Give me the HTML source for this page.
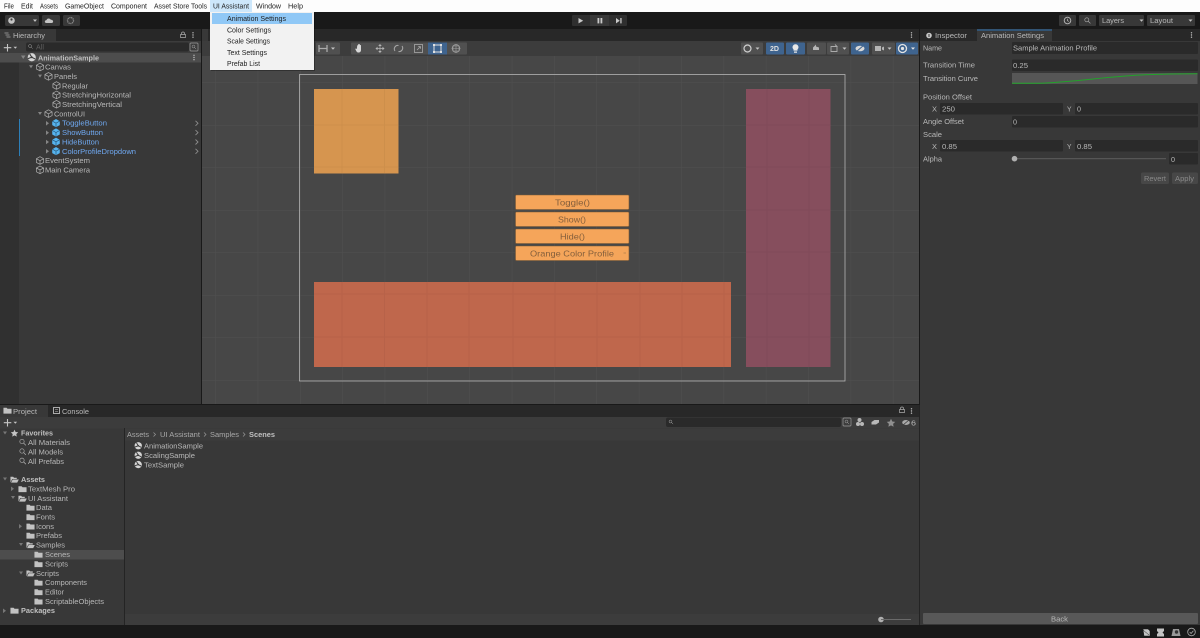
<!DOCTYPE html>
<html><head><meta charset="utf-8"><style>
html,body{margin:0;padding:0;background:#191919;width:1200px;height:638px;overflow:hidden}
svg{display:block;filter:blur(.35px)}
text{font-family:"Liberation Sans",sans-serif;font-size:7.6px;fill:#b8b8b8}
.m{fill:#1e1e1e}
.b{font-weight:bold;fill:#c0c0c0}
.p{fill:#6fa8f0}
.d{fill:#8a8a8a}
</style></head><body>
<svg width="1200" height="638" viewBox="0 0 1200 638" xmlns="http://www.w3.org/2000/svg">
<defs>
<symbol id="cube" viewBox="0 0 10 10"><path d="M5 .8 9 3v4.200L5 9.300 1 7.200V3ZM1 3l4 2.200L9 3M5 5.200v4" fill="none" stroke="#aaa" stroke-width=".8"/></symbol>
<symbol id="pre" viewBox="0 0 10 10"><path d="M5 .6 9.200 3v4.400L5 9.600.8 7.400V3Z" fill="#56b4ef"/><path d="M1 3l4 2.200L9 3M5 5.200v4" fill="none" stroke="#24506f" stroke-width=".7"/></symbol>
<symbol id="fold" viewBox="0 0 10 10"><path d="M.5 2h3.500l1 1h4.500v5.500H.5Z" fill="#c2c2c2"/></symbol>
<symbol id="open" viewBox="0 0 10 10"><path d="M.5 2h3l1 1h3v1.500H2.500L.5 8.500Z M3 5h6.800L8 8.500H1.200Z" fill="#c2c2c2"/></symbol>
<symbol id="sc" viewBox="0 0 10 10"><circle cx="5" cy="5" r="4.300" fill="#d4d4d4"/><path d="M5 5 2.900 1.500M5 5 1 6.500M5 5 8.500 6.800" stroke="#3a3a3a" stroke-width="1.100"/><circle cx="5" cy="5" r="1" fill="#3a3a3a"/></symbol>
<symbol id="mag" viewBox="0 0 10 10"><circle cx="4" cy="4" r="2.900" fill="none" stroke="#aaa" stroke-width=".9"/><path d="M6.200 6.200 9.200 9.200" stroke="#aaa" stroke-width="1"/></symbol>
<pattern id="grid" x="3.600" y="-2.500" width="42.350" height="42.500" patternUnits="userSpaceOnUse"><path d="M0 0V42.500M0 0H42.350" stroke="#505050" stroke-width="1" fill="none"/></pattern>
</defs>

<rect width="1200" height="638" fill="#191919"/>
<!-- menu -->
<rect width="1200" height="12" fill="#fdfdfd"/>
<rect x="210" y="0" width="42" height="12" fill="#cde7fb"/>
<g class="mn">
<text class="m" x="4" y="8.500" textLength="10" lengthAdjust="spacingAndGlyphs">File</text>
<text class="m" x="21" y="8.500" textLength="12" lengthAdjust="spacingAndGlyphs">Edit</text>
<text class="m" x="40" y="8.500" textLength="18" lengthAdjust="spacingAndGlyphs">Assets</text>
<text class="m" x="65" y="8.500" textLength="39" lengthAdjust="spacingAndGlyphs">GameObject</text>
<text class="m" x="111" y="8.500" textLength="36" lengthAdjust="spacingAndGlyphs">Component</text>
<text class="m" x="154" y="8.500" textLength="53" lengthAdjust="spacingAndGlyphs">Asset Store Tools</text>
<text class="m" x="213" y="8.500" textLength="36" lengthAdjust="spacingAndGlyphs">UI Assistant</text>
<text class="m" x="256" y="8.500" textLength="25" lengthAdjust="spacingAndGlyphs">Window</text>
<text class="m" x="288" y="8.500" textLength="15" lengthAdjust="spacingAndGlyphs">Help</text>
</g>

<!-- toolbar -->
<rect x="5" y="15" width="34" height="11" rx="1.500" fill="#383838"/>
<circle cx="11.500" cy="20.500" r="3.300" fill="#c4c4c4"/><circle cx="11.500" cy="19.500" r="1.100" fill="#383838"/>
<path d="M33 19.500h4l-2 2.400Z" fill="#c4c4c4"/>
<rect x="42" y="15" width="18" height="11" rx="1.500" fill="#383838"/>
<path d="M46.500 23c-2.200 0-2.200-2.700 0-2.900.5-2 3.500-2 4.300-.3 2.700-.3 3.200 3.200.7 3.200Z" fill="#c4c4c4"/>
<rect x="63" y="15" width="17" height="11" rx="1.500" fill="#383838"/>
<circle cx="70.500" cy="20.500" r="3" fill="none" stroke="#8b8b8b" stroke-width="1.300" stroke-dasharray="1.200 .6"/>

<rect x="572" y="15" width="55" height="11" rx="1" fill="#2f2f2f"/>
<rect x="590" y="15" width="19" height="11" fill="#383838"/>
<path d="M578.500 18v5.400l4.700-2.700Z" fill="#c8c8c8"/>
<rect x="597.500" y="18" width="1.800" height="5.400" fill="#c8c8c8"/><rect x="600.500" y="18" width="1.800" height="5.400" fill="#c8c8c8"/>
<path d="M616 18v5.400l3.800-2.700ZM620.300 18h1.300v5.400h-1.300Z" fill="#c8c8c8"/>

<rect x="1059" y="15" width="17" height="11" rx="1" fill="#383838"/>
<circle cx="1067.500" cy="20.500" r="3.300" fill="none" stroke="#bbb" stroke-width=".9"/><path d="M1067.500 18.700v2l1.300.8" stroke="#bbb" stroke-width=".7" fill="none"/>
<rect x="1079" y="15" width="17" height="11" rx="1" fill="#383838"/>
<use href="#mag" x="1084" y="17" width="7" height="7"/>
<rect x="1099" y="15" width="45" height="11" rx="1" fill="#383838"/>
<text x="1102" y="23" textLength="22" lengthAdjust="spacingAndGlyphs">Layers</text>
<path d="M1139.500 19.500h4l-2 2.300Z" fill="#c4c4c4"/>
<rect x="1147" y="15" width="48" height="11" rx="1" fill="#383838"/>
<text x="1150" y="23" textLength="23" lengthAdjust="spacingAndGlyphs">Layout</text>
<path d="M1188.500 19.500h4l-2 2.300Z" fill="#c4c4c4"/>

<!-- hierarchy -->
<rect x="0" y="29" width="201" height="375" fill="#383838"/>
<rect x="0" y="29" width="201" height="12" fill="#282828"/>
<rect x="0" y="29" width="56" height="12" fill="#383838"/>
<path d="M4.500 33h4M5.500 35h4M6.500 37h4" stroke="#aaa" stroke-width=".8"/>
<text x="13" y="38" textLength="32" lengthAdjust="spacingAndGlyphs">Hierarchy</text>
<path d="M181.500 34.500v-1c0-2 3-2 3 0v1M180.500 34.500h5v3h-5Z" fill="none" stroke="#aaa" stroke-width=".7"/>
<circle cx="193" cy="32.800" r=".7" fill="#c0c0c0"/><circle cx="193" cy="35" r=".7" fill="#c0c0c0"/><circle cx="193" cy="37.200" r=".7" fill="#c0c0c0"/>
<rect x="0" y="41" width="201" height="12" fill="#3c3c3c"/>
<path d="M7.500 44v7.500M3.800 47.700h7.500" stroke="#c4c4c4" stroke-width="1.100"/>
<path d="M13.500 46.700h3.600l-1.800 2Z" fill="#c4c4c4"/>
<rect x="26" y="42.500" width="163" height="9" rx="2" fill="#2a2a2a"/>
<use href="#mag" x="28" y="44" width="5" height="5"/>
<text x="36" y="49.500" class="d" style="fill:#5f5f5f" textLength="8" lengthAdjust="spacingAndGlyphs">All</text>
<rect x="190" y="43" width="8" height="8" rx="1" fill="none" stroke="#9a9a9a" stroke-width=".7"/><use href="#mag" x="191.500" y="44.500" width="5" height="5"/>
<rect x="0" y="53" width="19" height="351" fill="#303030"/>
<rect x="0" y="53" width="201" height="9.500" fill="#4d4d4d"/>
<path d="M21 55.500h4.500L23.200 59Z" fill="#858585"/>
<use href="#sc" x="27" y="52.500" width="9.500" height="9.500"/>
<text class="b" x="38" y="60.300" textLength="61" lengthAdjust="spacingAndGlyphs">AnimationSample</text>
<circle cx="194" cy="55.300" r=".7" fill="#c0c0c0"/><circle cx="194" cy="57.500" r=".7" fill="#c0c0c0"/><circle cx="194" cy="59.700" r=".7" fill="#c0c0c0"/>

<path d="M29 65.300h4l-2 3ZM38 74.600h4l-2 3ZM38 112h4l-2 3Z" fill="#858585"/>
<use href="#cube" x="35.500" y="62.500" width="9" height="9"/><text x="45" y="69.700" textLength="26" lengthAdjust="spacingAndGlyphs">Canvas</text>
<use href="#cube" x="44" y="71.800" width="9" height="9"/><text x="54" y="79" textLength="23" lengthAdjust="spacingAndGlyphs">Panels</text>
<use href="#cube" x="52" y="81" width="9" height="9"/><text x="62" y="88.300" textLength="26" lengthAdjust="spacingAndGlyphs">Regular</text>
<use href="#cube" x="52" y="90.400" width="9" height="9"/><text x="62" y="97.700" textLength="69" lengthAdjust="spacingAndGlyphs">StretchingHorizontal</text>
<use href="#cube" x="52" y="99.700" width="9" height="9"/><text x="62" y="107" textLength="60" lengthAdjust="spacingAndGlyphs">StretchingVertical</text>
<use href="#cube" x="44" y="109.100" width="9" height="9"/><text x="54" y="116.400" textLength="31" lengthAdjust="spacingAndGlyphs">ControlUI</text>
<rect x="19" y="119" width="1" height="37" fill="#2d7fb8"/>
<path d="M46 121l3 2.300-3 2.300ZM46 130.400l3 2.300-3 2.300ZM46 139.700l3 2.300-3 2.300ZM46 149l3 2.300-3 2.300Z" fill="#858585"/>
<use href="#pre" x="51.500" y="118.500" width="9" height="9"/><text class="p" x="62" y="125.700" textLength="45" lengthAdjust="spacingAndGlyphs">ToggleButton</text>
<use href="#pre" x="51.500" y="127.800" width="9" height="9"/><text class="p" x="62" y="135.100" textLength="41" lengthAdjust="spacingAndGlyphs">ShowButton</text>
<use href="#pre" x="51.500" y="137.100" width="9" height="9"/><text class="p" x="62" y="144.400" textLength="37" lengthAdjust="spacingAndGlyphs">HideButton</text>
<use href="#pre" x="51.500" y="146.500" width="9" height="9"/><text class="p" x="62" y="153.800" textLength="74" lengthAdjust="spacingAndGlyphs">ColorProfileDropdown</text>
<path d="M195.500 120.800l2.500 2.500-2.500 2.500M195.500 130.100l2.500 2.500-2.500 2.500M195.500 139.500l2.500 2.500-2.500 2.500M195.500 148.800l2.500 2.500-2.500 2.500" stroke="#8c8c8c" stroke-width=".9" fill="none"/>
<use href="#cube" x="35.500" y="156" width="9" height="9"/><text x="45" y="163.200" textLength="45" lengthAdjust="spacingAndGlyphs">EventSystem</text>
<use href="#cube" x="35.500" y="165.300" width="9" height="9"/><text x="45" y="172.600" textLength="45" lengthAdjust="spacingAndGlyphs">Main Camera</text>

<!-- scene -->
<rect x="202" y="29" width="717" height="12" fill="#282828"/>
<rect x="202" y="29" width="6" height="12" fill="#383838"/>
<circle cx="911.500" cy="32.800" r=".7" fill="#c0c0c0"/><circle cx="911.500" cy="35" r=".7" fill="#c0c0c0"/><circle cx="911.500" cy="37.200" r=".7" fill="#c0c0c0"/>
<rect x="202" y="41" width="717" height="15" fill="#3c3c3c"/>
<rect x="202" y="56" width="717" height="348" fill="#474747"/>
<rect x="202" y="56" width="717" height="348" fill="url(#grid)"/>
<rect x="316" y="42.500" width="24" height="12" rx="1" fill="#505050"/>
<path d="M319 45v7M327 45v7M319 48.500h8" stroke="#aaa" stroke-width="1.300" fill="none"/>
<path d="M331 47.500h4l-2 2.300Z" fill="#c4c4c4"/>
<rect x="351" y="42.500" width="116" height="12" rx="1" fill="#505050"/>
<rect x="428" y="42.500" width="19" height="12" fill="#3f648f"/>
<path d="M357 48c0-2 .3-3 1-3v3-3.500c.6-.7 1-.4 1 0v3.500-3.500c.6-.7 1-.4 1 .2v3.300-2.800c.6-.5 1-.2 1 .3v4.500c0 1.500-1 2.500-2.500 2.500s-2-.8-3-3c-.5-1 .5-1.500 1.500-.5Z" fill="#d8d8d8"/>
<path d="M380 45v7M376.500 48.500h7M380 44.500l-1 1.200h2ZM380 52.500l-1-1.200h2ZM376 48.500l1.200-1v2ZM384 48.500l-1.200-1v2Z" stroke="#b5b5b5" stroke-width=".7" fill="#b5b5b5"/>
<path d="M395 51a3.500 3.500 0 0 1 3.500-5.500M402 46a3.500 3.500 0 0 1-3.500 5.500" stroke="#a8a8a8" stroke-width="1" fill="none"/>
<rect x="414.500" y="44.500" width="8" height="8" fill="none" stroke="#a8a8a8" stroke-width=".8"/><path d="M417 50l3.500-3.500M420.500 46.500v2.300M420.500 46.500h-2.300" stroke="#a8a8a8" stroke-width=".8" fill="none"/>
<rect x="434" y="45" width="7" height="7" fill="none" stroke="#e0e0e0" stroke-width="1"/>
<rect x="433" y="44" width="2" height="2" fill="#e0e0e0"/><rect x="440" y="44" width="2" height="2" fill="#e0e0e0"/><rect x="433" y="51" width="2" height="2" fill="#e0e0e0"/><rect x="440" y="51" width="2" height="2" fill="#e0e0e0"/>
<circle cx="456" cy="48.500" r="3.800" fill="none" stroke="#a0a0a0" stroke-width=".8"/><path d="M456 44v9M451.500 48.500h9M453 46h6v5h-6Z" stroke="#a0a0a0" stroke-width=".6" fill="none"/>

<rect x="741" y="42.500" width="22" height="12" rx="1" fill="#505050"/>
<circle cx="747.500" cy="48.500" r="3.500" fill="none" stroke="#d0d0d0" stroke-width="1.200"/>
<path d="M755.500 47.500h4l-2 2.300Z" fill="#c4c4c4"/>
<rect x="766" y="42.500" width="18" height="12" rx="1" fill="#3f648f"/>
<text x="770" y="51.200" class="b" style="font-size:7px;fill:#e0e0e0" textLength="9" lengthAdjust="spacingAndGlyphs">2D</text>
<rect x="786" y="42.500" width="19" height="12" rx="1" fill="#3f648f"/>
<path d="M795.500 44.200a3 3 0 0 1 2 5.200v1.200h-4v-1.200a3 3 0 0 1 2-5.200ZM794 51.500h3v1.200h-3Z" fill="#e8e8e8"/>
<rect x="807" y="42.500" width="19" height="12" rx="1" fill="#505050"/>
<path d="M813 50v-2.500l3-3v2l3 1v2.500Z" fill="#b5b5b5"/>
<rect x="827" y="42.500" width="22" height="12" rx="1" fill="#505050"/>
<path d="M831 46.500h6v5h-6Z M835 44.500l2.500 2.500" stroke="#aaa" stroke-width=".9" fill="none"/>
<path d="M842.500 47.500h4l-2 2.300Z" fill="#c4c4c4"/>
<rect x="851" y="42.500" width="18" height="12" rx="1" fill="#3f648f"/>
<ellipse cx="860" cy="48.500" rx="4.500" ry="2.800" fill="#d8d8d8"/><path d="M856 52l8-7" stroke="#3f648f" stroke-width="1"/>
<rect x="872" y="42.500" width="23" height="12" rx="1" fill="#505050"/>
<rect x="875" y="46" width="6" height="5" fill="#b5b5b5"/><path d="M882 47.500l2-1v4l-2-1Z" fill="#b5b5b5"/>
<path d="M887.500 47.500h4l-2 2.300Z" fill="#c4c4c4"/>
<rect x="896" y="42.500" width="22" height="12" rx="1" fill="#3f648f"/>
<circle cx="902.500" cy="48.500" r="4" fill="none" stroke="#e4e4e4" stroke-width="1.300"/><circle cx="902.500" cy="48.500" r="1.600" fill="#e4e4e4"/>
<path d="M911 47.500h4l-2 2.300Z" fill="#e4e4e4"/>

<rect x="299.500" y="74.500" width="545.500" height="306.500" fill="none" stroke="#b4b4b4" stroke-width=".8"/>
<rect x="314" y="89" width="84.500" height="84.500" fill="#d6954f"/>
<rect x="314" y="282" width="417" height="85" fill="#bf674c"/>
<rect x="746" y="89" width="84.500" height="278" fill="#864e5d"/>
<g stroke="#000" stroke-opacity=".04"><path d="M342 89v84M384.500 89v84M342 282v85M384.500 282v85M427 282v85M469 282v85M513 282v85M555 282v85M597 282v85M640 282v85M682 282v85M724 282v85M767 89v278M809 89v278M314 125h84M314 167h84M314 294h417M314 337h417M746 125h84M746 167h84M746 210h84M746 252h84M746 294h84M746 337h84"/></g>

<g>
<rect x="515.500" y="195" width="113.500" height="14.500" rx="1" fill="#f5a55a" stroke="#7d5a36" stroke-width=".6"/>
<rect x="515.500" y="212" width="113.500" height="14.500" rx="1" fill="#f5a55a" stroke="#7d5a36" stroke-width=".6"/>
<rect x="515.500" y="229" width="113.500" height="14.500" rx="1" fill="#f5a55a" stroke="#7d5a36" stroke-width=".6"/>
<rect x="515.500" y="246" width="113.500" height="14.500" rx="1" fill="#f5a55a" stroke="#7d5a36" stroke-width=".6"/>
<text x="555" y="205.500" style="font-size:8.500px;fill:#845f3c" textLength="35" lengthAdjust="spacingAndGlyphs">Toggle()</text>
<text x="558" y="222.500" style="font-size:8.500px;fill:#845f3c" textLength="28" lengthAdjust="spacingAndGlyphs">Show()</text>
<text x="560" y="239.500" style="font-size:8.500px;fill:#845f3c" textLength="25" lengthAdjust="spacingAndGlyphs">Hide()</text>
<text x="530" y="256.500" style="font-size:8.500px;fill:#845f3c" textLength="84" lengthAdjust="spacingAndGlyphs">Orange Color Profile</text>
<path d="M623.500 253h2.500" stroke="#a87a48" stroke-width=".7"/>
</g>

<!-- dropdown -->
<rect x="211" y="13" width="104" height="58" fill="#000" opacity=".3"/>
<rect x="210" y="12" width="104" height="58" fill="#f2f2f2"/>
<rect x="212" y="13" width="100" height="11" fill="#90c8f6"/>
<text class="m" x="227" y="21" textLength="59" lengthAdjust="spacingAndGlyphs">Animation Settings</text>
<text class="m" x="227" y="32.300" textLength="44" lengthAdjust="spacingAndGlyphs">Color Settings</text>
<text class="m" x="227" y="43.600" textLength="43" lengthAdjust="spacingAndGlyphs">Scale Settings</text>
<text class="m" x="227" y="55" textLength="40" lengthAdjust="spacingAndGlyphs">Text Settings</text>
<text class="m" x="227" y="66" textLength="33" lengthAdjust="spacingAndGlyphs">Prefab List</text>

<!-- inspector -->
<rect x="920" y="29" width="280" height="596" fill="#383838"/>
<rect x="920" y="29" width="280" height="12" fill="#282828"/>
<rect x="977" y="29" width="75" height="12" fill="#383838"/>
<rect x="977" y="29.500" width="75" height="1" fill="#2d6fb0"/>
<circle cx="929" cy="35.500" r="2.800" fill="#c8c8c8"/><rect x="928.500" y="34" width="1" height="3" fill="#383838"/>
<text x="935" y="38" textLength="32" lengthAdjust="spacingAndGlyphs">Inspector</text>
<text x="981" y="38" textLength="63" lengthAdjust="spacingAndGlyphs">Animation Settings</text>
<circle cx="1191.500" cy="32.800" r=".7" fill="#c0c0c0"/><circle cx="1191.500" cy="35" r=".7" fill="#c0c0c0"/><circle cx="1191.500" cy="37.200" r=".7" fill="#c0c0c0"/>
<g fill="#2a2a2a">
<rect x="1012" y="42" width="186" height="12" rx="1"/>
<rect x="1012" y="59.500" width="186" height="11.500" rx="1"/>
<rect x="940" y="103" width="123" height="11.500" rx="1"/>
<rect x="1075" y="103" width="123" height="11.500" rx="1"/>
<rect x="1012" y="116" width="186" height="11.500" rx="1"/>
<rect x="940" y="140" width="123" height="11.500" rx="1"/>
<rect x="1075" y="140" width="123" height="11.500" rx="1"/>
<rect x="1169" y="153" width="29" height="11.500" rx="1"/>
</g>
<rect x="1012" y="73" width="185.500" height="11" fill="#565656"/>
<path d="M1012 83.300h28c30-1 70-7 105-8.500 20-.8 36-1 52.500-1" fill="none" stroke="#22a32a" stroke-width="1"/>
<text x="923" y="50.300" textLength="19" lengthAdjust="spacingAndGlyphs">Name</text>
<text x="1013" y="50.300" textLength="84" lengthAdjust="spacingAndGlyphs">Sample Animation Profile</text>
<text x="923" y="67.700" textLength="52" lengthAdjust="spacingAndGlyphs">Transition Time</text>
<text x="1013" y="68" textLength="15" lengthAdjust="spacingAndGlyphs">0.25</text>
<text x="923" y="80.800" textLength="55" lengthAdjust="spacingAndGlyphs">Transition Curve</text>
<text x="923" y="99.500" textLength="49" lengthAdjust="spacingAndGlyphs">Position Offset</text>
<text x="932" y="111.300" textLength="5" lengthAdjust="spacingAndGlyphs">X</text>
<text x="942" y="111.300" textLength="13" lengthAdjust="spacingAndGlyphs">250</text>
<text x="1067" y="111.300" textLength="4.500" lengthAdjust="spacingAndGlyphs">Y</text>
<text x="1077" y="111.300" textLength="4" lengthAdjust="spacingAndGlyphs">0</text>
<text x="923" y="124" textLength="41" lengthAdjust="spacingAndGlyphs">Angle Offset</text>
<text x="1013" y="124.300" textLength="4" lengthAdjust="spacingAndGlyphs">0</text>
<text x="923" y="137" textLength="19" lengthAdjust="spacingAndGlyphs">Scale</text>
<text x="932" y="148.800" textLength="5" lengthAdjust="spacingAndGlyphs">X</text>
<text x="942" y="148.800" textLength="15" lengthAdjust="spacingAndGlyphs">0.85</text>
<text x="1067" y="148.800" textLength="4.500" lengthAdjust="spacingAndGlyphs">Y</text>
<text x="1077" y="148.800" textLength="15" lengthAdjust="spacingAndGlyphs">0.85</text>
<text x="923" y="161.500" textLength="19" lengthAdjust="spacingAndGlyphs">Alpha</text>
<rect x="1014" y="158.200" width="152" height="1" fill="#5e5e5e"/>
<circle cx="1014.500" cy="158.700" r="2.800" fill="#b0b0b0"/>
<text x="1171" y="161.800" textLength="4" lengthAdjust="spacingAndGlyphs">0</text>
<rect x="1141" y="172.500" width="28" height="11.500" rx="1.500" fill="#474747"/>
<rect x="1172" y="172.500" width="26" height="11.500" rx="1.500" fill="#474747"/>
<text class="d" x="1144" y="181" textLength="22" lengthAdjust="spacingAndGlyphs">Revert</text>
<text class="d" x="1175" y="181" textLength="19" lengthAdjust="spacingAndGlyphs">Apply</text>
<rect x="923" y="613" width="275" height="11" rx="1" fill="#585858"/>
<text x="1051" y="621.500" textLength="17" lengthAdjust="spacingAndGlyphs">Back</text>

<!-- project -->
<rect x="0" y="405" width="919" height="220" fill="#383838"/>
<rect x="0" y="405" width="919" height="12" fill="#282828"/>
<rect x="0" y="405" width="48" height="12" fill="#383838"/>
<use href="#fold" x="3" y="406" width="9" height="9"/>
<text x="13" y="414" textLength="24" lengthAdjust="spacingAndGlyphs">Project</text>
<rect x="53.500" y="407.500" width="6" height="6" fill="none" stroke="#bbb" stroke-width=".9"/><path d="M55 409.500h3M55 411.500h3" stroke="#bbb" stroke-width=".6"/>
<text x="62" y="414" textLength="27" lengthAdjust="spacingAndGlyphs">Console</text>
<path d="M900.500 409.500v-1c0-2 3-2 3 0v1M899.500 409.500h5v3h-5Z" fill="none" stroke="#aaa" stroke-width=".7"/>
<circle cx="911.500" cy="408.800" r=".7" fill="#c0c0c0"/><circle cx="911.500" cy="411" r=".7" fill="#c0c0c0"/><circle cx="911.500" cy="413.200" r=".7" fill="#c0c0c0"/>
<rect x="0" y="417" width="919" height="11.500" fill="#3c3c3c"/>
<path d="M7.500 419v7.500M3.800 422.700h7.500" stroke="#c4c4c4" stroke-width="1.100"/>
<path d="M13.500 421.700h3.600l-1.800 2Z" fill="#c4c4c4"/>
<rect x="666" y="417.500" width="175" height="9.500" rx="2" fill="#2a2a2a"/>
<use href="#mag" x="668.500" y="419.500" width="5" height="5"/>
<rect x="843" y="418" width="8" height="8" rx="1" fill="none" stroke="#9a9a9a" stroke-width=".7"/><use href="#mag" x="844.500" y="419.500" width="5" height="5"/>
<circle cx="859.500" cy="420" r="2" fill="#b8b8b8"/><circle cx="858" cy="424" r="2" fill="#b8b8b8"/><circle cx="862" cy="424" r="2" fill="#b8b8b8"/>
<path d="M871.500 424.500v-2.500l3-2h4.500v2.500l-3 2Z" fill="#b8b8b8"/>
<path d="M891 418.800l1.300 2.700 2.900.4-2.100 2 .5 2.900-2.600-1.400-2.600 1.400.5-2.900-2.100-2 2.900-.4Z" fill="#8f8f8f"/>
<ellipse cx="906" cy="422.500" rx="3.800" ry="2.500" fill="#a8a8a8"/><path d="M902.500 425.500l7-6" stroke="#3c3c3c" stroke-width=".8"/>
<text x="911" y="425.500" textLength="5" lengthAdjust="spacingAndGlyphs">6</text>
<rect x="124" y="428" width="1" height="197" fill="#242424"/>
<rect x="125" y="429" width="794" height="11.500" fill="#3c3c3c"/>
<rect x="125" y="614" width="794" height="11" fill="#3c3c3c"/>
<rect x="0" y="550" width="124" height="9.500" fill="#4d4d4d"/>
<circle cx="881" cy="619.500" r="2.800" fill="#b0b0b0"/><rect x="881" y="619" width="30" height="1" fill="#6a6a6a"/>
<rect x="919" y="405" width="1" height="220" fill="#242424"/>

<text x="127" y="437" class="d" style="fill:#a8a8a8" textLength="22" lengthAdjust="spacingAndGlyphs">Assets</text>
<path d="M153.500 432.500l2 2-2 2M204 432.500l2 2-2 2M243 432.500l2 2-2 2" stroke="#999" stroke-width=".7" fill="none"/>
<text x="160" y="437" style="fill:#a8a8a8" textLength="40" lengthAdjust="spacingAndGlyphs">UI Assistant</text>
<text x="210" y="437" style="fill:#a8a8a8" textLength="29" lengthAdjust="spacingAndGlyphs">Samples</text>
<text class="b" x="249" y="437" textLength="26" lengthAdjust="spacingAndGlyphs">Scenes</text>
<use href="#sc" x="134" y="441.500" width="8.500" height="8.500"/><text x="144" y="448.700" textLength="59" lengthAdjust="spacingAndGlyphs">AnimationSample</text>
<use href="#sc" x="134" y="451" width="8.500" height="8.500"/><text x="144" y="458" textLength="51" lengthAdjust="spacingAndGlyphs">ScalingSample</text>
<use href="#sc" x="134" y="460.300" width="8.500" height="8.500"/><text x="144" y="467.500" textLength="40" lengthAdjust="spacingAndGlyphs">TextSample</text>

<path d="M3 431.500h4l-2 3ZM3 477.500h4l-2 3ZM11 496h4l-2 3ZM19 543h4l-2 3ZM19 571.500h4l-2 3ZM11 486.500l3 2.300-3 2.300ZM19 524l3 2.300-3 2.300ZM3 608.500l3 2.300-3 2.300Z" fill="#777"/>
<path d="M14.500 429.600l1.100 2.400 2.600.3-1.900 1.800.5 2.500-2.300-1.200-2.300 1.200.5-2.500-1.900-1.800 2.600-.3Z" fill="#c4c4c4"/>
<text class="b" x="21" y="435.700" textLength="32" lengthAdjust="spacingAndGlyphs">Favorites</text>
<use href="#mag" x="19" y="438.500" width="7.500" height="7.500"/><text x="28" y="445" textLength="42" lengthAdjust="spacingAndGlyphs">All Materials</text>
<use href="#mag" x="19" y="448" width="7.500" height="7.500"/><text x="28" y="454.500" textLength="35" lengthAdjust="spacingAndGlyphs">All Models</text>
<use href="#mag" x="19" y="457.300" width="7.500" height="7.500"/><text x="28" y="463.800" textLength="36" lengthAdjust="spacingAndGlyphs">All Prefabs</text>
<use href="#open" x="10" y="475" width="9" height="9"/><text class="b" x="21" y="482" textLength="24" lengthAdjust="spacingAndGlyphs">Assets</text>
<use href="#fold" x="18" y="484.500" width="9" height="9"/><text x="28" y="491.500" textLength="47" lengthAdjust="spacingAndGlyphs">TextMesh Pro</text>
<use href="#open" x="18" y="494" width="9" height="9"/><text x="28" y="500.800" textLength="40" lengthAdjust="spacingAndGlyphs">UI Assistant</text>
<use href="#fold" x="26" y="503" width="9" height="9"/><text x="36" y="510" textLength="16" lengthAdjust="spacingAndGlyphs">Data</text>
<use href="#fold" x="26" y="512.500" width="9" height="9"/><text x="36" y="519.500" textLength="19" lengthAdjust="spacingAndGlyphs">Fonts</text>
<use href="#fold" x="26" y="521.800" width="9" height="9"/><text x="36" y="528.800" textLength="18" lengthAdjust="spacingAndGlyphs">Icons</text>
<use href="#fold" x="26" y="531" width="9" height="9"/><text x="36" y="538" textLength="26" lengthAdjust="spacingAndGlyphs">Prefabs</text>
<use href="#open" x="26" y="540.500" width="9" height="9"/><text x="36" y="547.500" textLength="29" lengthAdjust="spacingAndGlyphs">Samples</text>
<use href="#fold" x="34" y="550" width="9" height="9"/><text x="45" y="557" textLength="25" lengthAdjust="spacingAndGlyphs">Scenes</text>
<use href="#fold" x="34" y="559.500" width="9" height="9"/><text x="45" y="566.500" textLength="23" lengthAdjust="spacingAndGlyphs">Scripts</text>
<use href="#open" x="26" y="568.700" width="9" height="9"/><text x="36" y="575.800" textLength="23" lengthAdjust="spacingAndGlyphs">Scripts</text>
<use href="#fold" x="34" y="578" width="9" height="9"/><text x="45" y="585" textLength="42" lengthAdjust="spacingAndGlyphs">Components</text>
<use href="#fold" x="34" y="587.500" width="9" height="9"/><text x="45" y="594.500" textLength="19" lengthAdjust="spacingAndGlyphs">Editor</text>
<use href="#fold" x="34" y="596.800" width="9" height="9"/><text x="45" y="603.800" textLength="59" lengthAdjust="spacingAndGlyphs">ScriptableObjects</text>
<use href="#fold" x="10" y="606" width="9" height="9"/><text class="b" x="21" y="613" textLength="34" lengthAdjust="spacingAndGlyphs">Packages</text>

<!-- status -->
<path d="M1143 629h5l2 2v5h-6ZM1143 630l6 5" fill="#c4c4c4" stroke="#191919" stroke-width=".5"/>
<path d="M1157 628.500h7v2.500l-1.500 1.500 1.500 1.500v2.500h-7v-2.500l1.500-1.500-1.500-1.500Z" fill="#c4c4c4"/>
<path d="M1173 629h6l1.500 7h-9Z" fill="#999"/><circle cx="1176.500" cy="632" r="1.700" fill="#333"/>
<circle cx="1191.500" cy="632" r="3.800" fill="none" stroke="#aaa" stroke-width=".8"/><path d="M1189.700 632l1.400 1.500 2.300-2.700" fill="none" stroke="#aaa" stroke-width=".8"/>
</svg>
</body></html>
